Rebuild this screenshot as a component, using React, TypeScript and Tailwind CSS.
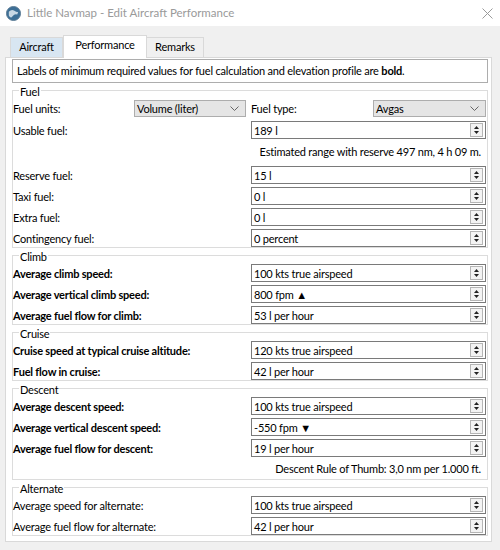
import React from 'react';

type Row = { label: string; value: string; bold?: boolean };

const SpinArrows = () => (
  <div className="ml-auto mr-[1px] flex h-[14px] w-[13px] flex-col items-center justify-center gap-[2px] border border-[#b5b5b5] bg-[#f3f3f3]">
    <svg width="5" height="3" viewBox="0 0 5 3">
      <path d="M2.5 0 L5 3 L0 3 Z" fill="#222" />
    </svg>
    <svg width="5" height="3" viewBox="0 0 5 3">
      <path d="M0 0 L5 0 L2.5 3 Z" fill="#222" />
    </svg>
  </div>
);

const SpinBox = ({ value }: { value: string }) => (
  <div className="flex h-[18px] w-[235px] items-center border border-[#7a7a7a] bg-white pl-[2px] pr-[1px]">
    <span className="leading-none">{value}</span>
    <SpinArrows />
  </div>
);

const Combo = ({ value, w }: { value: string; w: string }) => (
  <div className={`flex h-[17px] items-center border border-[#adadad] bg-[#e5e5e5] pl-[2px] pr-[6px] ${w}`}>
    <span className="leading-none">{value}</span>
    <svg className="ml-auto" width="9" height="5" viewBox="0 0 9 5">
      <path d="M0.5 0.5 L4.5 4.5 L8.5 0.5" fill="none" stroke="#666" strokeWidth="1" />
    </svg>
  </div>
);

const FieldRow = ({ label, value, bold }: Row) => (
  <div className="flex h-[18px] items-center">
    <span className={`w-[238px] shrink-0 leading-none ${bold ? 'font-bold' : ''}`}>{label}</span>
    <SpinBox value={value} />
  </div>
);

const Group = ({ title, children }: { title: string; children: React.ReactNode }) => (
  <div className="relative mt-[7px] border border-[#dcdcdc] pt-[8px] pr-[1px]">
    <span className="absolute -top-[7px] left-[6px] bg-white px-[1px] leading-[16px]">{title}</span>
    <div className="flex flex-col gap-[3px]">{children}</div>
  </div>
);

const climb: Row[] = [
  { label: 'Average climb speed:', value: '100 kts true airspeed', bold: true },
  { label: 'Average vertical climb speed:', value: '800 fpm ▲', bold: true },
  { label: 'Average fuel flow for climb:', value: '53 l per hour', bold: true },
];

const cruise: Row[] = [
  { label: 'Cruise speed at typical cruise altitude:', value: '120 kts true airspeed', bold: true },
  { label: 'Fuel flow in cruise:', value: '42 l per hour', bold: true },
];

const descent: Row[] = [
  { label: 'Average descent speed:', value: '100 kts true airspeed', bold: true },
  { label: 'Average vertical descent speed:', value: '-550 fpm ▼', bold: true },
  { label: 'Average fuel flow for descent:', value: '19 l per hour', bold: true },
];

const alternate: Row[] = [
  { label: 'Average speed for alternate:', value: '100 kts true airspeed' },
  { label: 'Average fuel flow for alternate:', value: '42 l per hour' },
];

export default function App() {
  return (
    <div className="h-[550px] w-[500px] overflow-hidden bg-[#f0f0f0] font-['Lato',sans-serif] text-[11px] tracking-[-0.2px] text-black">
      {/* title bar */}
      <div className="flex h-[26px] items-center bg-white pl-[6px] pr-[7px]">
        <svg width="15" height="15" viewBox="0 0 16 16">
          <circle cx="8" cy="8" r="7.5" fill="#3d6f96" />
          <path d="M3 6 Q6 3 9 5 T13 6 L12 9 Q9 8 7 11 T3 10 Z" fill="#c8d8e4" />
          <circle cx="8" cy="8" r="7.5" fill="none" stroke="#5a7a93" />
        </svg>
        <span className="ml-[6px] text-[11.5px] tracking-normal text-[#9a9a9a]">Little Navmap - Edit Aircraft Performance</span>
        <svg className="ml-auto" width="11" height="11" viewBox="0 0 11 11">
          <path d="M0.5 0.5 L10.5 10.5 M10.5 0.5 L0.5 10.5" stroke="#9a9a9a" strokeWidth="1" />
        </svg>
      </div>

      <div className="pl-[5px] pr-[8px] pt-[10px]">
        {/* tabs */}
        <div className="relative z-10 flex h-[21px] items-end pl-[5px]">
          <div className="flex h-[20px] w-[53px] items-center justify-center border border-b-0 border-[#d9d9d9] bg-[#d8e6f2]">
            Aircraft
          </div>
          <div className="-mb-[1px] flex h-[23px] w-[84px] items-center justify-center border border-b-0 border-[#d9d9d9] bg-white pb-[3px]">
            Performance
          </div>
          <div className="flex h-[20px] w-[57px] items-center justify-center border border-b-0 border-l-0 border-[#d9d9d9] bg-[#f0f0f0]">
            Remarks
          </div>
        </div>

        {/* tab panel */}
        <div className="h-[485px] border border-[#d9d9d9] bg-white pl-[6px] pr-[3px] pt-[1px]">
          <div className="flex h-[24px] items-center border border-[#adadad] bg-white pl-[4px]">
            <span>
              Labels of minimum required values for fuel calculation and elevation profile are <b>bold</b>.
            </span>
          </div>

          <Group title="Fuel">
            <div className="flex h-[19px] items-center">
              <span className="w-[121px] shrink-0 leading-none">Fuel units:</span>
              <Combo value="Volume (liter)" w="w-[112px]" />
              <span className="ml-[5px] w-[122px] shrink-0 leading-none">Fuel type:</span>
              <Combo value="Avgas" w="w-[113px]" />
            </div>
            <FieldRow label="Usable fuel:" value="189 l" />
            <div className="flex h-[21px] items-center justify-end pr-[5px]">
              Estimated range with reserve 497 nm, 4 h 09 m.
            </div>
            <FieldRow label="Reserve fuel:" value="15 l" />
            <FieldRow label="Taxi fuel:" value="0 l" />
            <FieldRow label="Extra fuel:" value="0 l" />
            <FieldRow label="Contingency fuel:" value="0 percent" />
          </Group>

          <Group title="Climb">
            {climb.map((r) => (
              <FieldRow key={r.label} {...r} />
            ))}
          </Group>

          <Group title="Cruise">
            {cruise.map((r) => (
              <FieldRow key={r.label} {...r} />
            ))}
          </Group>

          <Group title="Descent">
            {descent.map((r) => (
              <FieldRow key={r.label} {...r} />
            ))}
            <div className="flex h-[19px] items-center justify-end pr-[5px]">
              Descent Rule of Thumb: 3,0 nm per 1.000 ft.
            </div>
          </Group>

          <Group title="Alternate">
            {alternate.map((r) => (
              <FieldRow key={r.label} {...r} />
            ))}
          </Group>
        </div>
      </div>
    </div>
  );
}
